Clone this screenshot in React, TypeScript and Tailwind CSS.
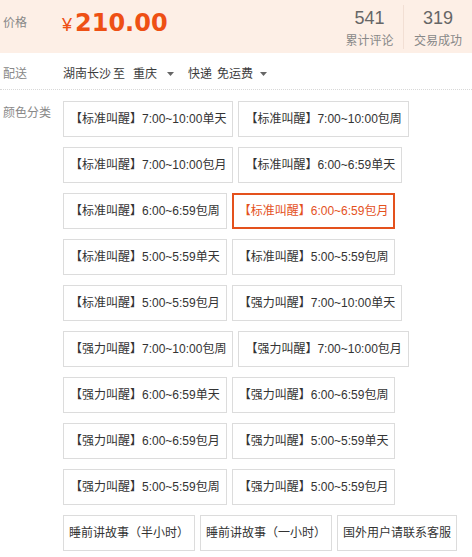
import React from "react";

const items: { label: string; selected?: boolean; plain?: boolean }[] = [
  { label: "【标准叫醒】7:00~10:00单天" },
  { label: "【标准叫醒】7:00~10:00包周" },
  { label: "【标准叫醒】7:00~10:00包月" },
  { label: "【标准叫醒】6:00~6:59单天" },
  { label: "【标准叫醒】6:00~6:59包周" },
  { label: "【标准叫醒】6:00~6:59包月", selected: true },
  { label: "【标准叫醒】5:00~5:59单天" },
  { label: "【标准叫醒】5:00~5:59包周" },
  { label: "【标准叫醒】5:00~5:59包月" },
  { label: "【强力叫醒】7:00~10:00单天" },
  { label: "【强力叫醒】7:00~10:00包周" },
  { label: "【强力叫醒】7:00~10:00包月" },
  { label: "【强力叫醒】6:00~6:59单天" },
  { label: "【强力叫醒】6:00~6:59包周" },
  { label: "【强力叫醒】6:00~6:59包月" },
  { label: "【强力叫醒】5:00~5:59单天" },
  { label: "【强力叫醒】5:00~5:59包周" },
  { label: "【强力叫醒】5:00~5:59包月" },
  { label: "睡前讲故事（半小时）", plain: true },
  { label: "睡前讲故事（一小时）", plain: true },
  { label: "国外用户请联系客服", plain: true },
];

function Caret({ ml }: { ml: string }) {
  return (
    <svg width="7" height="4" viewBox="0 0 7 4" className={ml}>
      <path d="M0 0 L7 0 L3.5 4 Z" fill="#666" />
    </svg>
  );
}

export default function App() {
  return (
    <div className="w-[472px] h-[557px] bg-white overflow-hidden text-[12px] font-['Liberation_Sans','Noto_Sans_CJK_SC',sans-serif]">
      {/* price band */}
      <div className="h-[53px] bg-[#fdefe6] flex items-start">
        <div className="h-[45px] flex items-center">
          <div className="w-[63px] pl-[3px] text-[#888] leading-[18px]">价格</div>
          <div className="flex items-baseline text-[#ee5014] -ml-px">
            <span className="text-[18px] leading-none">¥</span>
            <span className="text-[24px] font-bold leading-none font-['DejaVu_Sans',sans-serif] ml-[3px]">210.00</span>
          </div>
        </div>
        <div className="ml-auto flex h-[53px] items-center">
          <div className="w-[68px] h-[44px] flex flex-col items-center border-r border-[#f2dfd4]">
            <div className="text-[18px] leading-[20px] text-[#666] mt-[3px]">541</div>
            <div className="text-[12px] leading-[16px] text-[#888] mt-[5px]">累计评论</div>
          </div>
          <div className="w-[68px] h-[44px] flex flex-col items-center">
            <div className="text-[18px] leading-[20px] text-[#666] mt-[3px]">319</div>
            <div className="text-[12px] leading-[16px] text-[#888] mt-[5px]">交易成功</div>
          </div>
        </div>
      </div>

      {/* delivery */}
      <div className="h-[37px] pt-[6px] flex items-center border-b border-dotted border-[#d8d8d8]">
        <div className="w-[63px] pl-[3px] text-[#888]">配送</div>
        <div className="flex items-center text-[#3c3c3c]">
          <span>湖南长沙</span>
          <span className="ml-[2px]">至</span>
          <span className="ml-[8px]">重庆</span>
          <Caret ml="ml-[10px]" />
          <span className="ml-[14px]">快递</span>
          <span className="ml-[5px]">免运费</span>
          <Caret ml="ml-[7px]" />
        </div>
      </div>

      {/* color */}
      <div className="flex pt-[11px]">
        <div className="w-[63px] shrink-0 pl-[3px] pt-[3px] text-[#888] leading-[18px]">颜色分类</div>
        <div className="flex-1 flex flex-wrap gap-x-[5px] gap-y-[10px]">
          {items.map((it) =>
            it.selected ? (
              <div
                key={it.label}
                className="h-[36px] px-[5px] border-2 border-[#e4511d] text-[#e4511d] flex items-center whitespace-nowrap"
              >
                {it.label}
              </div>
            ) : it.plain ? (
              <div
                key={it.label}
                className="h-[36px] px-[5px] border border-[#dcdcdc] text-[#333] flex items-center whitespace-nowrap"
              >
                {it.label}
              </div>
            ) : (
              <div
                key={it.label}
                className="h-[36px] px-[6px] border border-[#dcdcdc] text-[#333] flex items-center whitespace-nowrap"
              >
                {it.label}
              </div>
            )
          )}
        </div>
      </div>
    </div>
  );
}
